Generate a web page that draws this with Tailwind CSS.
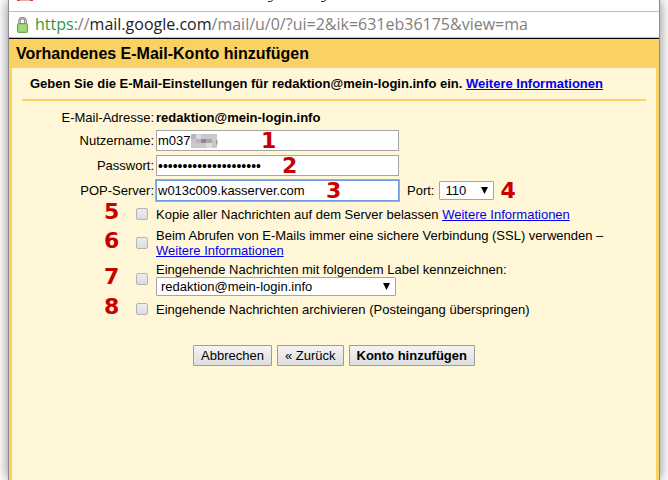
<!DOCTYPE html>
<html lang="de">
<head>
  <meta charset="UTF-8" />
  <meta name="viewport" content="width=device-width, initial-scale=1" />
  <title>Vorhandenes E-Mail-Konto hinzufügen</title>
  <script src="https://cdn.jsdelivr.net/npm/@tailwindcss/browser@4"></script>
</head>
<body class="bg-white font-['Liberation_Sans',Arial,sans-serif] text-[13px] leading-4 text-black overflow-hidden">
  <!-- Popup window -->
  <div class="mx-2 min-h-screen flex flex-col border-x border-[#8c8c8c] shadow-[0_0_12px_rgba(0,0,0,0.5)]">
    <!-- Lower edge of the window title bar -->
    <div class="h-[11px] pl-2 bg-white">
      <svg class="w-[320px] h-[3px]" viewBox="0 0 320 3">
        <path d="M0 0h16v1H0z" fill="#f3aaa8" />
        <path d="M0 0h3v1H0zM13 0h3v1h-3z" fill="#d9423e" />
        <path d="M251 1.500h2.500q1.500 0 2-1.500M304 1.500h2.500q1.500 0 2-1.500" fill="none" stroke="#222" />
      </svg>
    </div>

    <!-- Address bar -->
    <div class="h-[27px] flex items-center gap-[7px] pl-2 bg-white border-y border-[#b9bdc6] overflow-hidden">
      <svg class="w-[11px] h-4 shrink-0" viewBox="0 0 11 16">
        <path d="M2.5 7V4a3 3 0 0 1 6 0v3" fill="none" stroke="#777" stroke-width="2.4" />
        <path d="M2.5 7V4a3 3 0 0 1 6 0v3" fill="none" stroke="#c8c8c8" stroke-width="1" />
        <rect x="0.5" y="6.5" width="10" height="9" rx="1" fill="#93cf6a" stroke="#6fa257" />
        <path d="M2 9h7M2 11h7M2 13h7" stroke="#b4e092" stroke-width="1" />
      </svg>
      <div class="pb-[2px] font-['Open_Sans','Noto_Sans',sans-serif] text-[16px] leading-6 whitespace-nowrap text-[#808080]"><span class="text-[#2f9a3c]">https</span>://<span class="text-[#222]">mail.google.com</span>/mail/u/0/?ui=2&amp;ik=631eb36175&amp;view=ma</div>
    </div>

    <main class="grow flex flex-col border-t border-black bg-[#fad163] px-[3px]">
      <h1 class="h-[29px] pl-1 text-[16px] leading-[30px] font-bold whitespace-nowrap">Vorhandenes E-Mail-Konto hinzufügen</h1>

      <div class="grow bg-[#fff7d7]">
        <h2 class="mx-[10px] px-2 pt-2 pb-[7px] border-b-2 border-[#fad163] font-bold whitespace-nowrap">Geben Sie die E-Mail-Einstellungen für redaktion@mein-login.info ein. <a href="#" class="text-[#0000ee] underline">Weitere Informationen</a></h2>

        <form class="pt-[9px]">
          <div class="grid grid-cols-[142px_1fr] gap-x-[2px] gap-y-1 items-center whitespace-nowrap">
            <span class="text-right">E-Mail-Adresse:</span>
            <b>redaktion@mein-login.info</b>

            <label for="user" class="text-right">Nutzername:</label>
            <div class="relative flex">
              <input id="user" type="text" value="m037" class="w-[243px] h-[21px] px-px bg-white border border-[#a5a5a5]" />
              <!-- Redacted part of the name -->
              <svg class="absolute left-[35px] top-1 w-[27px] h-[14px]" viewBox="0 0 27 14">
                <path d="M0 0h26v14H0z" fill="#c9c9cc" />
                <path d="M0 0h5v5H0zM5 5h5v4H5z" fill="#b5b6bb" />
                <path d="M10 5h5v4h-5z" fill="#93849c" />
                <path d="M15 5h6v4h-6z" fill="#aaa6ae" />
                <path d="M5 0h5v5H5zM15 9h6v5h-6z" fill="#dcdcdf" />
                <path d="M25.500 6q1.500 2 0 4.500" fill="none" stroke="#8a8468" />
              </svg>
              <span class="absolute left-[105px] top-0 font-['DejaVu_Sans',sans-serif] text-[22px] leading-[22px] font-bold text-[#c80000]">1</span>
            </div>

            <label for="pass" class="text-right">Passwort:</label>
            <div class="relative flex">
              <input id="pass" type="password" value="geheimesmailpasswort1" class="w-[243px] h-[21px] px-px bg-white border border-[#a5a5a5] text-[14px]" />
              <span class="absolute left-[126px] top-0 font-['DejaVu_Sans',sans-serif] text-[22px] leading-[22px] font-bold text-[#c80000]">2</span>
            </div>

            <label for="server" class="text-right">POP-Server:</label>
            <div class="relative flex items-center">
              <input id="server" type="text" value="w013c009.kasserver.com" class="w-[243px] h-[21px] px-px bg-white border border-[#6f9be0] ring-1 ring-[#8fb0e6]" />
              <label for="port" class="ml-2 mr-[5px]">Port:</label>
              <div class="relative flex">
                <select id="port" class="appearance-none w-[55px] h-[19px] pl-[5px] bg-white border border-[#a5a5a5] rounded-[1px] leading-4">
                  <option>110</option>
                </select>
                <svg class="absolute right-[6px] top-[6px] w-[7px] h-[7px] pointer-events-none" viewBox="0 0 7 7"><path d="M0 0h7L3.500 7z" /></svg>
              </div>
              <span class="absolute left-[170px] top-0 font-['DejaVu_Sans',sans-serif] text-[22px] leading-[22px] font-bold text-[#c80000]">3</span>
              <span class="ml-[6px] font-['DejaVu_Sans',sans-serif] text-[22px] leading-[21px] font-bold text-[#c80000]">4</span>
            </div>
          </div>

          <!-- Options -->
          <div class="mt-[5px] grid grid-cols-[24px_12px_1fr] gap-x-2 items-center pl-[92px] leading-[15px] whitespace-nowrap">
            <span class="pb-1 font-['DejaVu_Sans',sans-serif] text-[22px] leading-3 font-bold text-[#c80000]">5</span>
            <input id="keep" type="checkbox" class="appearance-none w-3 h-3 border border-[#b4b4b4] rounded-[2px] bg-linear-to-b from-[#eeeeee] to-[#dcdcdc]" />
            <div><label for="keep">Kopie aller Nachrichten auf dem Server belassen</label> <a href="#" class="text-[#0000ee] underline">Weitere Informationen</a></div>

            <span class="mt-[6px] pb-1 font-['DejaVu_Sans',sans-serif] text-[22px] leading-3 font-bold text-[#c80000]">6</span>
            <input id="ssl" type="checkbox" class="mt-[6px] appearance-none w-3 h-3 border border-[#b4b4b4] rounded-[2px] bg-linear-to-b from-[#eeeeee] to-[#dcdcdc]" />
            <div class="mt-[6px]"><label for="ssl">Beim Abrufen von E-Mails immer eine sichere Verbindung (SSL) verwenden –</label><br /><a href="#" class="text-[#0000ee] underline">Weitere Informationen</a></div>

            <span class="mt-1 pb-1 font-['DejaVu_Sans',sans-serif] text-[22px] leading-3 font-bold text-[#c80000]">7</span>
            <input id="label" type="checkbox" class="mt-1 appearance-none w-3 h-3 border border-[#b4b4b4] rounded-[2px] bg-linear-to-b from-[#eeeeee] to-[#dcdcdc]" />
            <div class="mt-1">
              <label for="label" class="block">Eingehende Nachrichten mit folgendem Label kennzeichnen:</label>
              <div class="relative flex w-[240px]">
                <select aria-label="Label" class="appearance-none w-full h-[19px] pl-1 bg-white border border-[#a5a5a5] rounded-[1px] leading-4">
                  <option>redaktion@mein-login.info</option>
                </select>
                <svg class="absolute right-[6px] top-[6px] w-[7px] h-[7px] pointer-events-none" viewBox="0 0 7 7"><path d="M0 0h7L3.500 7z" /></svg>
              </div>
            </div>

            <span class="mt-[5px] pb-1 font-['DejaVu_Sans',sans-serif] text-[22px] leading-3 font-bold text-[#c80000]">8</span>
            <input id="archive" type="checkbox" class="mt-[5px] appearance-none w-3 h-3 border border-[#b4b4b4] rounded-[2px] bg-linear-to-b from-[#eeeeee] to-[#dcdcdc]" />
            <label for="archive" class="mt-[5px]">Eingehende Nachrichten archivieren (Posteingang überspringen)</label>
          </div>

          <div class="mt-7 flex justify-center gap-[5px] whitespace-nowrap">
            <button type="button" class="h-[21px] px-[7px] border border-[#9c9c9c] rounded-[1px] bg-linear-to-b from-[#f4f4f4] to-[#dedede]">Abbrechen</button>
            <button type="button" class="h-[21px] px-[7px] border border-[#9c9c9c] rounded-[1px] bg-linear-to-b from-[#f4f4f4] to-[#dedede]">« Zurück</button>
            <button type="submit" class="h-[21px] px-[7px] border border-[#9c9c9c] rounded-[1px] bg-linear-to-b from-[#f4f4f4] to-[#dedede] font-bold">Konto hinzufügen</button>
          </div>
        </form>
      </div>
    </main>
  </div>
</body>
</html>
